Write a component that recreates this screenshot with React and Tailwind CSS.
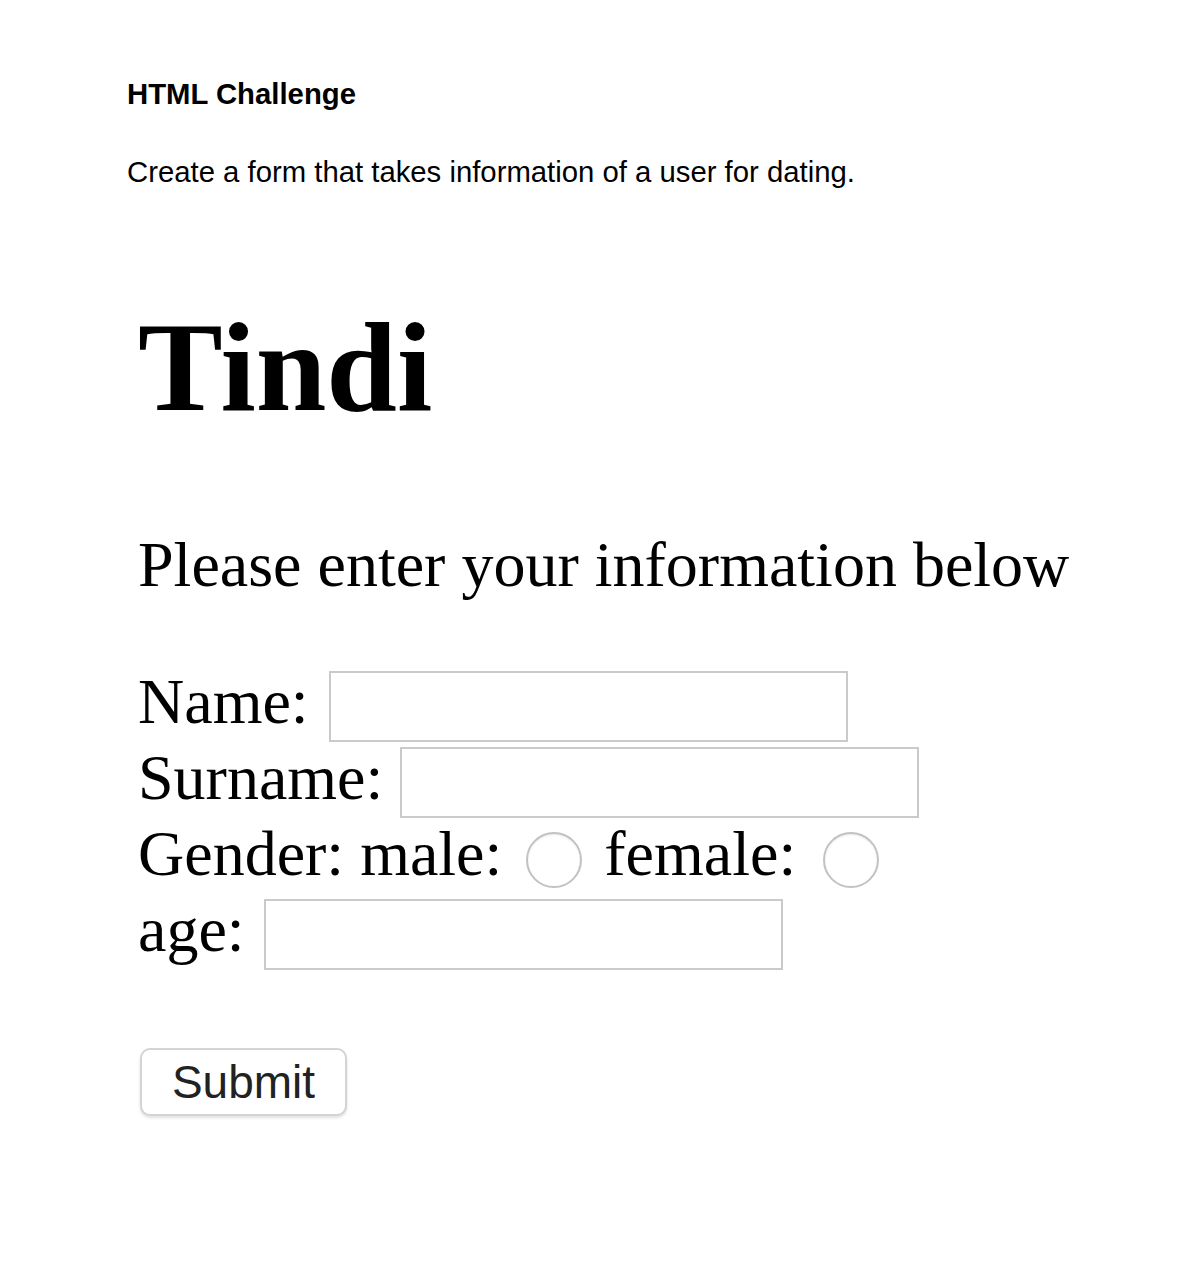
import React from 'react';

// Tindi — dating sign-up form (HTML challenge)

const serif = { fontFamily: '"Liberation Serif", "Times New Roman", serif' };

const TextBox = ({ className = '' }) => (
  <input
    type="text"
    className={`block w-[519px] h-[71px] border-2 border-[#cacaca] bg-white outline-none ${className}`}
  />
);

const Radio = ({ name, className = '' }) => (
  <input
    type="radio"
    name={name}
    className={`block appearance-none w-[56px] h-[56px] rounded-full border-2 border-[#c2c2c2] bg-white shadow-[inset_0_1px_2px_rgba(0,0,0,0.08)] ${className}`}
  />
);

const App = () => {
  return (
    <div className="w-[1200px] h-[1264px] bg-white text-black overflow-hidden">
      <div className="pt-[77px] pl-[127px]" style={{ fontFamily: '"Liberation Sans", Arial, sans-serif' }}>
        <p className="text-[29.3px] leading-[34px] font-bold">HTML Challenge</p>
        <p className="mt-[44px] text-[29.3px] leading-[34px]">
          Create a form that takes information of a user for dating.
        </p>
      </div>

      <div className="pl-[138px]" style={serif}>
        <h1 className="mt-[115px] text-[127px] leading-[127px] font-bold">Tindi</h1>
        <p className="mt-[102px] text-[64px] leading-[64px]">Please enter your information below</p>

        <form className="mt-[67px] text-[64px] leading-[76px]" onSubmit={(e) => e.preventDefault()}>
          <div className="flex items-start h-[76px]">
            <span>Name:</span>
            <TextBox className="ml-[20px] mt-[7px]" />
          </div>
          <div className="flex items-start h-[76px]">
            <span>Surname:</span>
            <TextBox className="ml-[17px] mt-[7px]" />
          </div>
          <div className="flex items-start h-[76px]">
            <span>Gender: male:</span>
            <Radio name="gender" className="ml-[24px] mt-[16px]" />
            <span className="ml-[22px]">female:</span>
            <Radio name="gender" className="ml-[27px] mt-[16px]" />
          </div>
          <div className="flex items-start h-[76px]">
            <span>age:</span>
            <TextBox className="ml-[19px] mt-[7px]" />
          </div>

          <button
            type="submit"
            className="mt-[80px] ml-[2px] w-[207px] h-[68px] rounded-[10px] border-2 border-[#d4d4d4] bg-white shadow-[0_2px_3px_rgba(0,0,0,0.12)] text-[46px] leading-none text-[#222]"
            style={{ fontFamily: '"Liberation Sans", Arial, sans-serif' }}
          >
            Submit
          </button>
        </form>
      </div>
    </div>
  );
};

export default App;
